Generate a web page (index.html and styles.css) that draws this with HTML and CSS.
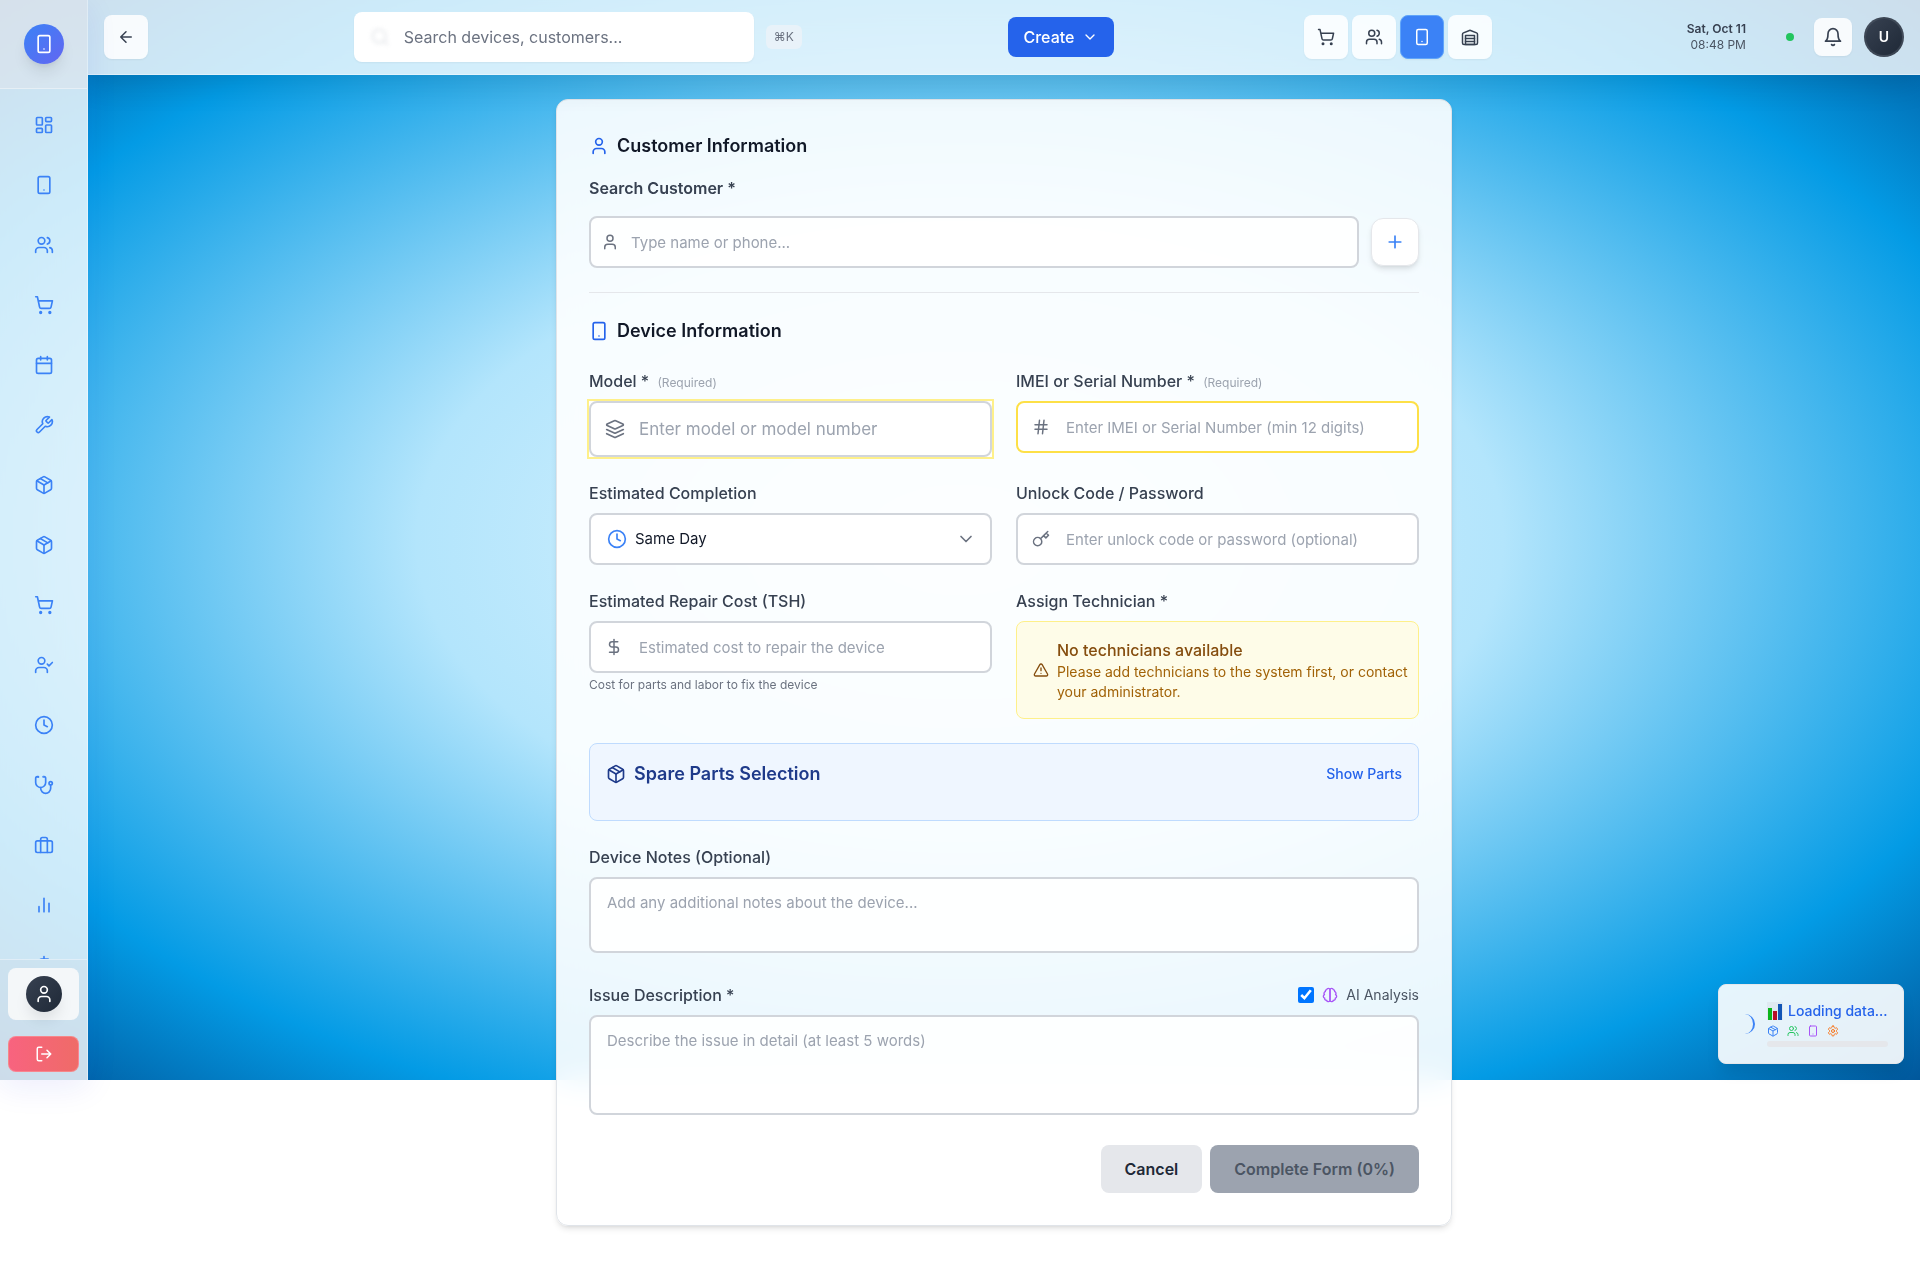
FILE: index.html
```html
<!DOCTYPE html>
<html lang="en">
<head>
<meta charset="utf-8">
<meta name="viewport" content="width=device-width, initial-scale=1">
<title>New Device</title>
<link rel="stylesheet" href="styles.css">
</head>
<body>
<svg class="sprite" aria-hidden="true">
  <symbol id="i-phone" viewBox="0 0 24 24"><rect x="5" y="2" width="14" height="20" rx="2"/><path d="M12 18h.01"/></symbol>
  <symbol id="i-dashboard" viewBox="0 0 24 24"><rect x="3" y="3" width="7" height="9" rx="1"/><rect x="14" y="3" width="7" height="5" rx="1"/><rect x="14" y="12" width="7" height="9" rx="1"/><rect x="3" y="16" width="7" height="5" rx="1"/></symbol>
  <symbol id="i-user" viewBox="0 0 24 24"><path d="M19 21v-2a4 4 0 0 0-4-4H9a4 4 0 0 0-4 4v2"/><circle cx="12" cy="7" r="4"/></symbol>
  <symbol id="i-users" viewBox="0 0 24 24"><path d="M16 21v-2a4 4 0 0 0-4-4H6a4 4 0 0 0-4 4v2"/><circle cx="9" cy="7" r="4"/><path d="M22 21v-2a4 4 0 0 0-3-3.87"/><path d="M16 3.13a4 4 0 0 1 0 7.75"/></symbol>
  <symbol id="i-user-check" viewBox="0 0 24 24"><path d="M16 21v-2a4 4 0 0 0-4-4H6a4 4 0 0 0-4 4v2"/><circle cx="9" cy="7" r="4"/><path d="m16 11 2 2 4-4"/></symbol>
  <symbol id="i-cart" viewBox="0 0 24 24"><circle cx="8" cy="21" r="1"/><circle cx="19" cy="21" r="1"/><path d="M2.05 2.05h2l2.66 12.42a2 2 0 0 0 2 1.58h9.78a2 2 0 0 0 1.95-1.57l1.65-7.43H5.12"/></symbol>
  <symbol id="i-calendar" viewBox="0 0 24 24"><rect x="3" y="4" width="18" height="18" rx="2"/><path d="M16 2v4M8 2v4M3 10h18"/></symbol>
  <symbol id="i-wrench" viewBox="0 0 24 24"><path d="M14.7 6.3a1 1 0 0 0 0 1.4l1.6 1.6a1 1 0 0 0 1.4 0l3.77-3.77a6 6 0 0 1-7.94 7.94l-6.91 6.91a2.12 2.12 0 0 1-3-3l6.91-6.91a6 6 0 0 1 7.94-7.94l-3.76 3.76z"/></symbol>
  <symbol id="i-package" viewBox="0 0 24 24"><path d="m7.5 4.27 9 5.15"/><path d="M21 8a2 2 0 0 0-1-1.73l-7-4a2 2 0 0 0-2 0l-7 4A2 2 0 0 0 3 8v8a2 2 0 0 0 1 1.73l7 4a2 2 0 0 0 2 0l7-4A2 2 0 0 0 21 16Z"/><path d="m3.3 7 8.7 5 8.7-5"/><path d="M12 22V12"/></symbol>
  <symbol id="i-clock" viewBox="0 0 24 24"><circle cx="12" cy="12" r="10"/><path d="M12 6v6l4 2"/></symbol>
  <symbol id="i-stethoscope" viewBox="0 0 24 24"><path d="M4.8 2.3A.3.3 0 1 0 5 2H4a2 2 0 0 0-2 2v5a6 6 0 0 0 12 0V4a2 2 0 0 0-2-2h-1a.2.2 0 1 0 .3.3"/><path d="M8 15v1a6 6 0 0 0 12 0v-4"/><circle cx="20" cy="10" r="2"/></symbol>
  <symbol id="i-briefcase" viewBox="0 0 24 24"><rect x="2" y="7" width="20" height="14" rx="2"/><path d="M16 21V5a2 2 0 0 0-2-2h-4a2 2 0 0 0-2 2v16"/></symbol>
  <symbol id="i-chart" viewBox="0 0 24 24"><path d="M18 20V10M12 20V4M6 20v-6"/></symbol>
  <symbol id="i-dollar" viewBox="0 0 24 24"><path d="M12 2v20"/><path d="M17 5H9.5a3.5 3.5 0 0 0 0 7h5a3.5 3.5 0 0 1 0 7H6"/></symbol>
  <symbol id="i-logout" viewBox="0 0 24 24"><path d="M9 21H5a2 2 0 0 1-2-2V5a2 2 0 0 1 2-2h4"/><path d="m16 17 5-5-5-5M21 12H9"/></symbol>
  <symbol id="i-back" viewBox="0 0 24 24"><path d="m12 19-7-7 7-7M19 12H5"/></symbol>
  <symbol id="i-search" viewBox="0 0 24 24"><circle cx="11" cy="11" r="8"/><path d="m21 21-4.3-4.3"/></symbol>
  <symbol id="i-chevron" viewBox="0 0 24 24"><path d="m6 9 6 6 6-6"/></symbol>
  <symbol id="i-warehouse" viewBox="0 0 24 24"><path d="M22 8.35V20a2 2 0 0 1-2 2H4a2 2 0 0 1-2-2V8.35A2 2 0 0 1 3.26 6.5l8-3.2a2 2 0 0 1 1.48 0l8 3.2A2 2 0 0 1 22 8.35Z"/><path d="M6 18h12M6 14h12"/><rect x="6" y="10" width="12" height="12"/></symbol>
  <symbol id="i-bell" viewBox="0 0 24 24"><path d="M6 8a6 6 0 0 1 12 0c0 7 3 9 3 9H3s3-2 3-9"/><path d="M10.3 21a1.94 1.94 0 0 0 3.4 0"/></symbol>
  <symbol id="i-plus" viewBox="0 0 24 24"><path d="M5 12h14M12 5v14"/></symbol>
  <symbol id="i-layers" viewBox="0 0 24 24"><path d="M12.83 2.18a2 2 0 0 0-1.66 0L2.6 6.08a1 1 0 0 0 0 1.83l8.58 3.91a2 2 0 0 0 1.66 0l8.58-3.9a1 1 0 0 0 0-1.83Z"/><path d="m22 17.65-9.17 4.16a2 2 0 0 1-1.66 0L2 17.65"/><path d="m22 12.65-9.17 4.16a2 2 0 0 1-1.66 0L2 12.65"/></symbol>
  <symbol id="i-hash" viewBox="0 0 24 24"><path d="M4 9h16M4 15h16M10 3 8 21M16 3l-2 18"/></symbol>
  <symbol id="i-key" viewBox="0 0 24 24"><path d="m21 2-2 2m-7.61 7.61a5.5 5.5 0 1 1-7.778 7.778 5.5 5.5 0 0 1 7.777-7.777zm0 0L15.5 7.5m0 0 3 3L22 7l-3-3m-3.5 3.5L19 4"/></symbol>
  <symbol id="i-alert" viewBox="0 0 24 24"><path d="m21.73 18-8-14a2 2 0 0 0-3.48 0l-8 14A2 2 0 0 0 4 21h16a2 2 0 0 0 1.73-3Z"/><path d="M12 9v4M12 17h.01"/></symbol>
  <symbol id="i-brain" viewBox="0 0 24 24"><path d="M9.5 2A2.5 2.5 0 0 1 12 4.5v15a2.5 2.5 0 0 1-4.96.44 2.5 2.5 0 0 1-2.96-3.08 3 3 0 0 1-.34-5.58 2.5 2.5 0 0 1 1.32-4.24 2.5 2.5 0 0 1 1.98-3A2.5 2.5 0 0 1 9.5 2Z"/><path d="M14.5 2A2.5 2.5 0 0 0 12 4.5v15a2.5 2.5 0 0 0 4.96.44 2.5 2.5 0 0 0 2.96-3.08 3 3 0 0 0 .34-5.58 2.5 2.5 0 0 0-1.32-4.24 2.5 2.5 0 0 0-1.98-3A2.5 2.5 0 0 0 14.5 2Z"/></symbol>
  <symbol id="i-gear" viewBox="0 0 24 24"><path d="M12.22 2h-.44a2 2 0 0 0-2 2v.18a2 2 0 0 1-1 1.73l-.43.25a2 2 0 0 1-2 0l-.15-.08a2 2 0 0 0-2.73.73l-.22.38a2 2 0 0 0 .73 2.73l.15.1a2 2 0 0 1 1 1.72v.51a2 2 0 0 1-1 1.74l-.15.09a2 2 0 0 0-.73 2.73l.22.38a2 2 0 0 0 2.73.73l.15-.08a2 2 0 0 1 2 0l.43.25a2 2 0 0 1 1 1.73V20a2 2 0 0 0 2 2h.44a2 2 0 0 0 2-2v-.18a2 2 0 0 1 1-1.73l.43-.25a2 2 0 0 1 2 0l.15.08a2 2 0 0 0 2.73-.73l.22-.39a2 2 0 0 0-.73-2.73l-.15-.08a2 2 0 0 1-1-1.74v-.5a2 2 0 0 1 1-1.74l.15-.09a2 2 0 0 0 .73-2.73l-.22-.38a2 2 0 0 0-2.73-.73l-.15.08a2 2 0 0 1-2 0l-.43-.25a2 2 0 0 1-1-1.73V4a2 2 0 0 0-2-2z"/><circle cx="12" cy="12" r="3"/></symbol>
</svg>

<div class="backdrop"></div>

<div class="app">
  <aside class="sidebar">
    <div class="sidebar-top"><span class="logo"><svg class="icon"><use href="#i-phone"/></svg></span></div>
    <nav class="sidebar-nav" aria-label="Main">
      <a href="#" class="nav-link" aria-label="Dashboard"><svg class="icon"><use href="#i-dashboard"/></svg></a>
      <a href="#" class="nav-link" aria-label="Devices"><svg class="icon"><use href="#i-phone"/></svg></a>
      <a href="#" class="nav-link" aria-label="Customers"><svg class="icon"><use href="#i-users"/></svg></a>
      <a href="#" class="nav-link" aria-label="Sales"><svg class="icon"><use href="#i-cart"/></svg></a>
      <a href="#" class="nav-link" aria-label="Appointments"><svg class="icon"><use href="#i-calendar"/></svg></a>
      <a href="#" class="nav-link" aria-label="Services"><svg class="icon"><use href="#i-wrench"/></svg></a>
      <a href="#" class="nav-link" aria-label="Inventory"><svg class="icon"><use href="#i-package"/></svg></a>
      <a href="#" class="nav-link" aria-label="Spare parts"><svg class="icon"><use href="#i-package"/></svg></a>
      <a href="#" class="nav-link" aria-label="Purchase orders"><svg class="icon"><use href="#i-cart"/></svg></a>
      <a href="#" class="nav-link" aria-label="Employees"><svg class="icon"><use href="#i-user-check"/></svg></a>
      <a href="#" class="nav-link" aria-label="Attendance"><svg class="icon"><use href="#i-clock"/></svg></a>
      <a href="#" class="nav-link" aria-label="Diagnostics"><svg class="icon"><use href="#i-stethoscope"/></svg></a>
      <a href="#" class="nav-link" aria-label="Business"><svg class="icon"><use href="#i-briefcase"/></svg></a>
      <a href="#" class="nav-link" aria-label="Reports"><svg class="icon"><use href="#i-chart"/></svg></a>
      <a href="#" class="nav-link" aria-label="Finance"><svg class="icon"><use href="#i-dollar"/></svg></a>
    </nav>
    <div class="sidebar-bottom">
      <button type="button" class="profile" aria-label="Profile"><span class="profile-avatar"><svg class="icon"><use href="#i-user"/></svg></span></button>
      <button type="button" class="logout" aria-label="Log out"><svg class="icon icon-18"><use href="#i-logout"/></svg></button>
    </div>
  </aside>

  <div class="page">
    <header class="topbar">
      <button type="button" class="tool" aria-label="Back"><svg class="icon icon-18"><use href="#i-back"/></svg></button>
      <div class="search">
        <button type="button" class="search-box"><svg class="icon search-icon"><use href="#i-search"/></svg><span>Search devices, customers...</span></button>
        <kbd class="shortcut">⌘K</kbd>
      </div>
      <button type="button" class="create">Create <svg class="icon icon-16"><use href="#i-chevron"/></svg></button>
      <nav class="tools" aria-label="Shortcuts">
        <button type="button" class="tool" aria-label="Sales"><svg class="icon icon-18"><use href="#i-cart"/></svg></button>
        <button type="button" class="tool" aria-label="Customers"><svg class="icon icon-18"><use href="#i-users"/></svg></button>
        <button type="button" class="tool tool-active" aria-label="Devices"><svg class="icon icon-18"><use href="#i-phone"/></svg></button>
        <button type="button" class="tool" aria-label="Inventory"><svg class="icon icon-18"><use href="#i-warehouse"/></svg></button>
      </nav>
      <div class="status">
        <div class="clock"><strong>Sat, Oct 11</strong><span>08:48 PM</span></div>
        <span class="online"></span>
        <div class="account">
          <button type="button" class="tool bell" aria-label="Notifications"><svg class="icon"><use href="#i-bell"/></svg></button>
          <button type="button" class="avatar">U</button>
        </div>
      </div>
    </header>

    <main class="content">
      <form class="card">
        <section class="customer">
          <h3 class="heading"><svg class="icon"><use href="#i-user"/></svg>Customer Information</h3>
          <label class="label label-strong" for="customer">Search Customer *</label>
          <div class="customer-row">
            <div class="field grow">
              <svg class="icon icon-18 field-icon near"><use href="#i-user"/></svg>
              <input class="input input-near" id="customer" type="text" placeholder="Type name or phone...">
            </div>
            <button type="button" class="add" aria-label="Add customer"><svg class="icon"><use href="#i-plus"/></svg></button>
          </div>
        </section>

        <h3 class="heading"><svg class="icon"><use href="#i-phone"/></svg>Device Information</h3>

        <div class="columns">
          <div>
            <label class="label" for="model">Model * <small>(Required)</small></label>
            <div class="field ring">
              <svg class="icon field-icon"><use href="#i-layers"/></svg>
              <input class="input input-large" id="model" type="text" placeholder="Enter model or model number">
            </div>
          </div>
          <div>
            <label class="label" for="imei">IMEI or Serial Number * <small>(Required)</small></label>
            <div class="field">
              <svg class="icon icon-18 field-icon"><use href="#i-hash"/></svg>
              <input class="input input-warning" id="imei" type="text" placeholder="Enter IMEI or Serial Number (min 12 digits)">
            </div>
          </div>
          <div>
            <label class="label" for="completion">Estimated Completion</label>
            <div class="field">
              <svg class="icon field-icon clock-icon"><use href="#i-clock"/></svg>
              <select class="input select" id="completion"><option>Same Day</option></select>
              <svg class="icon field-icon field-icon-end"><use href="#i-chevron"/></svg>
            </div>
          </div>
          <div>
            <label class="label" for="unlock">Unlock Code / Password</label>
            <div class="field">
              <svg class="icon icon-18 field-icon"><use href="#i-key"/></svg>
              <input class="input" id="unlock" type="text" placeholder="Enter unlock code or password (optional)">
            </div>
          </div>
          <div>
            <label class="label" for="cost">Estimated Repair Cost (TSH)</label>
            <div class="field">
              <svg class="icon icon-18 field-icon"><use href="#i-dollar"/></svg>
              <input class="input" id="cost" type="text" placeholder="Estimated cost to repair the device">
            </div>
            <p class="hint">Cost for parts and labor to fix the device</p>
          </div>
          <div>
            <div class="label">Assign Technician *</div>
            <div class="alert">
              <svg class="icon icon-16"><use href="#i-alert"/></svg>
              <div><p class="alert-title">No technicians available</p><p class="alert-text">Please add technicians to the system first, or contact your administrator.</p></div>
            </div>
          </div>
        </div>

        <section class="parts">
          <h3 class="heading"><svg class="icon"><use href="#i-package"/></svg>Spare Parts Selection</h3>
          <button type="button" class="link">Show Parts</button>
        </section>

        <div class="block">
          <label class="label" for="notes">Device Notes (Optional)</label>
          <textarea class="input area" id="notes" placeholder="Add any additional notes about the device..."></textarea>
        </div>

        <div class="block">
          <div class="label-row">
            <label class="label" for="issue">Issue Description *</label>
            <label class="ai"><input type="checkbox" checked><svg class="icon icon-16"><use href="#i-brain"/></svg>AI Analysis</label>
          </div>
          <textarea class="input area area-tall" id="issue" placeholder="Describe the issue in detail (at least 5 words)"></textarea>
        </div>

        <div class="actions">
          <button type="button" class="btn">Cancel</button>
          <button type="submit" class="btn btn-muted" disabled>Complete Form (0%)</button>
        </div>
      </form>
    </main>
  </div>
</div>

<div class="toast-layer">
  <div class="toast" role="status">
    <span class="spinner"></span>
    <div class="toast-body">
      <div class="toast-title">
        <svg class="chart" viewBox="0 0 16 18"><rect width="16" height="18" fill="#dfe9f1"/><rect x="1" y="6" width="4" height="12" fill="#0cb51c"/><rect x="6" y="9" width="4" height="9" fill="#b80f26"/><rect x="11" y="2" width="4" height="16" fill="#1255b5"/></svg>
        Loading data...
      </div>
      <div class="toast-icons">
        <svg class="icon icon-12 blue"><use href="#i-package"/></svg>
        <svg class="icon icon-12 green"><use href="#i-users"/></svg>
        <svg class="icon icon-12 purple"><use href="#i-phone"/></svg>
        <svg class="icon icon-12 orange"><use href="#i-gear"/></svg>
      </div>
      <div class="track"></div>
    </div>
  </div>
</div>
</body>
</html>
```
FILE: styles.css
```css
:root {
  --stage: min(1080px, 100vh);
  --rail: 88px;
  --blue: #2563eb;
  --sky: #3b82f6;
  --ink: #111827;
  --text: #374151;
  --muted: #6b7280;
  --faint: #9ca3af;
  --line: #d1d5db;
}

*, *::before, *::after { box-sizing: border-box; }

body {
  margin: 0;
  background: #fff;
  color: var(--ink);
  font-family: Inter, "Liberation Sans", sans-serif;
  font-size: 16px;
  line-height: 24px;
}

h3, p { margin: 0; }

button, input, select, textarea { font: inherit; color: inherit; margin: 0; }

button { border: 0; padding: 0; background: none; }

a { color: inherit; }

.sprite { position: absolute; width: 0; height: 0; }

.icon {
  width: 20px;
  height: 20px;
  flex: none;
  fill: none;
  stroke: currentColor;
  stroke-width: 2;
  stroke-linecap: round;
  stroke-linejoin: round;
}
.icon-18 { width: 18px; height: 18px; }
.icon-16 { width: 16px; height: 16px; }
.icon-12 { width: 12px; height: 12px; }

.backdrop {
  position: absolute;
  inset: 0 0 auto;
  height: var(--stage);
  background: radial-gradient(ellipse at center, #e1f5fe 0%, #b3e5fc 40%, #039be5 80%, #01579b 100%);
}

.app {
  display: grid;
  grid-template-columns: var(--rail) minmax(0, 1fr);
  align-items: start;
}

/* Sidebar */
.sidebar {
  position: sticky;
  top: 0;
  z-index: 3;
  height: var(--stage);
  display: flex;
  flex-direction: column;
  background: rgba(255, 255, 255, .8);
  border-right: 1px solid rgba(255, 255, 255, .4);
  box-shadow: 0 8px 32px rgba(31, 38, 235, .08);
  backdrop-filter: blur(20px);
}
.sidebar-top {
  display: flex;
  justify-content: center;
  padding: 24px;
  background: rgba(229, 231, 235, .4);
  border-bottom: 1px solid rgba(255, 255, 255, .4);
}
.logo {
  display: grid;
  place-items: center;
  flex: none;
  width: 40px;
  height: 40px;
  border-radius: 50%;
  color: #fff;
  background: linear-gradient(135deg, #3b82f6, #6366f1);
  box-shadow: 0 10px 15px -3px rgba(0, 0, 0, .1), 0 4px 6px -4px rgba(0, 0, 0, .1);
}
.sidebar-nav {
  flex: 1;
  min-height: 0;
  overflow: hidden;
  display: flex;
  flex-direction: column;
  gap: 12px;
  padding: 12px 8px;
}
.nav-link {
  flex: none;
  display: grid;
  place-items: center;
  height: 48px;
  color: var(--sky);
}
.sidebar-bottom {
  display: grid;
  gap: 16px;
  padding: 8px;
  background: rgba(203, 213, 225, .2);
  border-top: 1px solid rgba(255, 255, 255, .4);
}
.profile {
  display: grid;
  place-items: center;
  padding: 8px;
  border-radius: 8px;
  background: rgba(250, 250, 250, .85);
}
.profile-avatar {
  display: grid;
  place-items: center;
  width: 36px;
  height: 36px;
  border-radius: 50%;
  color: #fff;
  background: linear-gradient(135deg, #374151, #1f2937);
  box-shadow: 0 10px 15px -3px rgba(0, 0, 0, .1);
}
.logout {
  display: grid;
  place-items: center;
  height: 36px;
  border: 1px solid rgba(252, 165, 165, .5);
  border-radius: 8px;
  color: #fff;
  background: linear-gradient(90deg, #f8637f, #ef6b68);
}

/* Top bar */
.topbar {
  position: relative;
  z-index: 2;
  display: flex;
  align-items: center;
  justify-content: space-between;
  padding: 12px 16px;
  background: rgba(255, 255, 255, .8);
  border-bottom: 1px solid rgba(255, 255, 255, .4);
  box-shadow: 0 8px 32px rgba(0, 0, 0, .12);
  backdrop-filter: blur(20px);
}
.tool {
  display: grid;
  place-items: center;
  width: 44px;
  height: 44px;
  border-radius: 8px;
  color: var(--text);
  background: rgba(255, 255, 255, .85);
  box-shadow: 0 1px 2px rgba(0, 0, 0, .05);
}
.tool-active {
  color: #fff;
  background: var(--sky);
  border: 1px solid #60a5fa;
}
.tools { display: flex; gap: 4px; }
.search {
  flex: 0 1 480px;
  display: flex;
  align-items: center;
  gap: 12px;
  padding: 0 16px;
}
.search-box {
  flex: 1;
  display: flex;
  align-items: center;
  gap: 14px;
  height: 50px;
  padding: 0 16px;
  border-radius: 8px;
  color: var(--muted);
  background: #fff;
  box-shadow: 0 1px 2px rgba(0, 0, 0, .05);
}
.search-icon { color: #d1d5db; filter: blur(2px); opacity: .6; }
.shortcut {
  padding: 4px 8px;
  border-radius: 6px;
  font: 12px/16px Inter, "DejaVu Sans", sans-serif;
  color: var(--muted);
  background: rgba(243, 244, 246, .6);
}
.create {
  display: flex;
  align-items: center;
  gap: 8px;
  height: 40px;
  padding: 0 16px;
  border-radius: 8px;
  font-weight: 500;
  color: #fff;
  background: var(--blue);
}
.status, .account { display: flex; align-items: center; }
.clock {
  display: grid;
  min-width: 64px;
  text-align: right;
  font-size: 12px;
  line-height: 16px;
  color: #4b5563;
}
.clock strong { font-weight: 600; color: var(--text); }
.online {
  width: 8px;
  height: 8px;
  margin: 0 20px 0 40px;
  border-radius: 50%;
  background: #22c55e;
}
.account { gap: 12px; }
.bell { width: 38px; height: 38px; }
.avatar {
  width: 40px;
  height: 40px;
  border: 2px solid rgba(75, 85, 99, .6);
  border-radius: 50%;
  font-size: 14px;
  font-weight: 600;
  color: #fff;
  background: linear-gradient(135deg, #374151, #1f2937);
}

/* Form card */
.content { padding: 24px 24px 56px; }
.card {
  display: grid;
  gap: 24px;
  max-width: 896px;
  margin: 0 auto;
  padding: 32px;
  border: 1px solid #e0e4e9;
  border-radius: 12px;
  background: rgba(255, 255, 255, .9);
  box-shadow: 0 4px 6px -1px rgba(0, 0, 0, .1), 0 2px 4px -2px rgba(0, 0, 0, .1);
  backdrop-filter: blur(16px);
}
.customer {
  display: grid;
  gap: 16px;
  padding-bottom: 24px;
  border-bottom: 1px solid #e5e7eb;
}
.heading {
  display: flex;
  align-items: center;
  gap: 8px;
  font-size: 18px;
  line-height: 28px;
  font-weight: 600;
}
.heading .icon { color: var(--blue); }
.label {
  display: block;
  margin-bottom: 8px;
  font-weight: 500;
  color: var(--text);
}
.label small {
  margin-left: 4px;
  font-size: 12px;
  line-height: 16px;
  font-weight: 400;
  color: var(--faint);
}
.label-strong { margin: 0; font-weight: 600; }
.customer-row { display: flex; align-items: center; gap: 12px; }
.grow { flex: 1; }
.add {
  display: grid;
  place-items: center;
  width: 48px;
  height: 48px;
  border: 1px solid #e5e7eb;
  border-radius: 12px;
  color: var(--sky);
  background: #fff;
  box-shadow: 0 4px 6px -1px rgba(0, 0, 0, .1), 0 2px 4px -2px rgba(0, 0, 0, .1);
}

.field { position: relative; display: flex; }
.field-icon {
  position: absolute;
  left: 16px;
  top: 0;
  bottom: 0;
  margin: auto 0;
  color: var(--muted);
  pointer-events: none;
}
.near { left: 12px; }
.clock-icon { left: 18px; color: var(--sky); }
.field-icon-end { left: auto; right: 16px; }
.input {
  display: block;
  width: 100%;
  height: 52px;
  padding: 0 16px 0 48px;
  border: 2px solid var(--line);
  border-radius: 8px;
  outline: none;
  font-size: 15px;
  color: var(--ink);
  background: rgba(255, 255, 255, .9);
}
.input::placeholder { color: var(--faint); opacity: 1; }
.input-near { padding-left: 40px; }
.input-large { height: 56px; font-size: 17px; }
.input-warning { border-color: #fde047; }
.ring { box-shadow: 0 0 0 2px #fef08a; background: #fff; }
.select { appearance: none; padding-left: 44px; }
.columns { display: grid; grid-template-columns: 1fr 1fr; gap: 24px; }
.hint {
  margin-top: 4px;
  font-size: 12px;
  line-height: 16px;
  color: var(--muted);
}

.alert {
  display: flex;
  align-items: center;
  gap: 8px;
  padding: 16px 8px 16px 16px;
  border: 1px solid #fef08a;
  border-radius: 8px;
  color: #854d0e;
  background: #fefce8;
}
.alert-title { font-weight: 500; }
.alert-text { font-size: 14px; line-height: 20px; color: #a16207; }

.parts {
  display: flex;
  align-items: center;
  justify-content: space-between;
  padding: 16px 16px 32px;
  border: 1px solid #bfdbfe;
  border-radius: 8px;
  background: #eff6ff;
}
.parts .heading, .parts .heading .icon { color: #1e3a8a; }
.link { font-size: 14px; line-height: 20px; font-weight: 500; color: var(--blue); }

.block { padding-bottom: 6px; }
.area { height: 76px; padding: 12px 16px; resize: none; }
.area-tall { height: 100px; }
.label-row { display: flex; justify-content: space-between; }
.ai {
  display: flex;
  align-items: center;
  gap: 8px;
  height: 24px;
  font-size: 14px;
  line-height: 20px;
  color: #4b5563;
}
.ai input { width: 16px; height: 16px; accent-color: #0075ff; }
.ai .icon { color: #a855f7; }

.actions { display: flex; justify-content: flex-end; gap: 8px; }
.btn {
  height: 48px;
  padding: 0 24px;
  border-radius: 8px;
  font-weight: 600;
  color: #1f2937;
  background: #e5e7eb;
}
.btn-muted { color: #4b5563; background: #9ca3af; }

/* Loading toast */
.toast-layer {
  position: absolute;
  inset: 0 0 auto;
  z-index: 4;
  height: var(--stage);
  display: flex;
  align-items: flex-end;
  justify-content: flex-end;
  padding: 16px;
  pointer-events: none;
}
.toast {
  display: flex;
  align-items: center;
  gap: 12px;
  padding: 16px;
  border: 1px solid #e5e7eb;
  border-radius: 8px;
  background: rgba(255, 255, 255, .9);
  box-shadow: 0 10px 15px -3px rgba(0, 0, 0, .1);
}
.spinner {
  width: 20px;
  height: 20px;
  border-right: 2px solid var(--sky);
  border-radius: 50%;
}
.toast-body { display: grid; gap: 4px; width: 120px; }
.toast-title {
  display: flex;
  align-items: center;
  gap: 5px;
  font-size: 14px;
  line-height: 20px;
  font-weight: 500;
  white-space: nowrap;
  color: var(--blue);
}
.chart { width: 16px; height: 18px; flex: none; }
.toast-icons { display: flex; gap: 8px; }
.blue { color: #3b82f6; }
.green { color: #22c55e; }
.purple { color: #a855f7; }
.orange { color: #f97316; }
.track { height: 6px; border-radius: 3px; background: #e5e7eb; }
```
